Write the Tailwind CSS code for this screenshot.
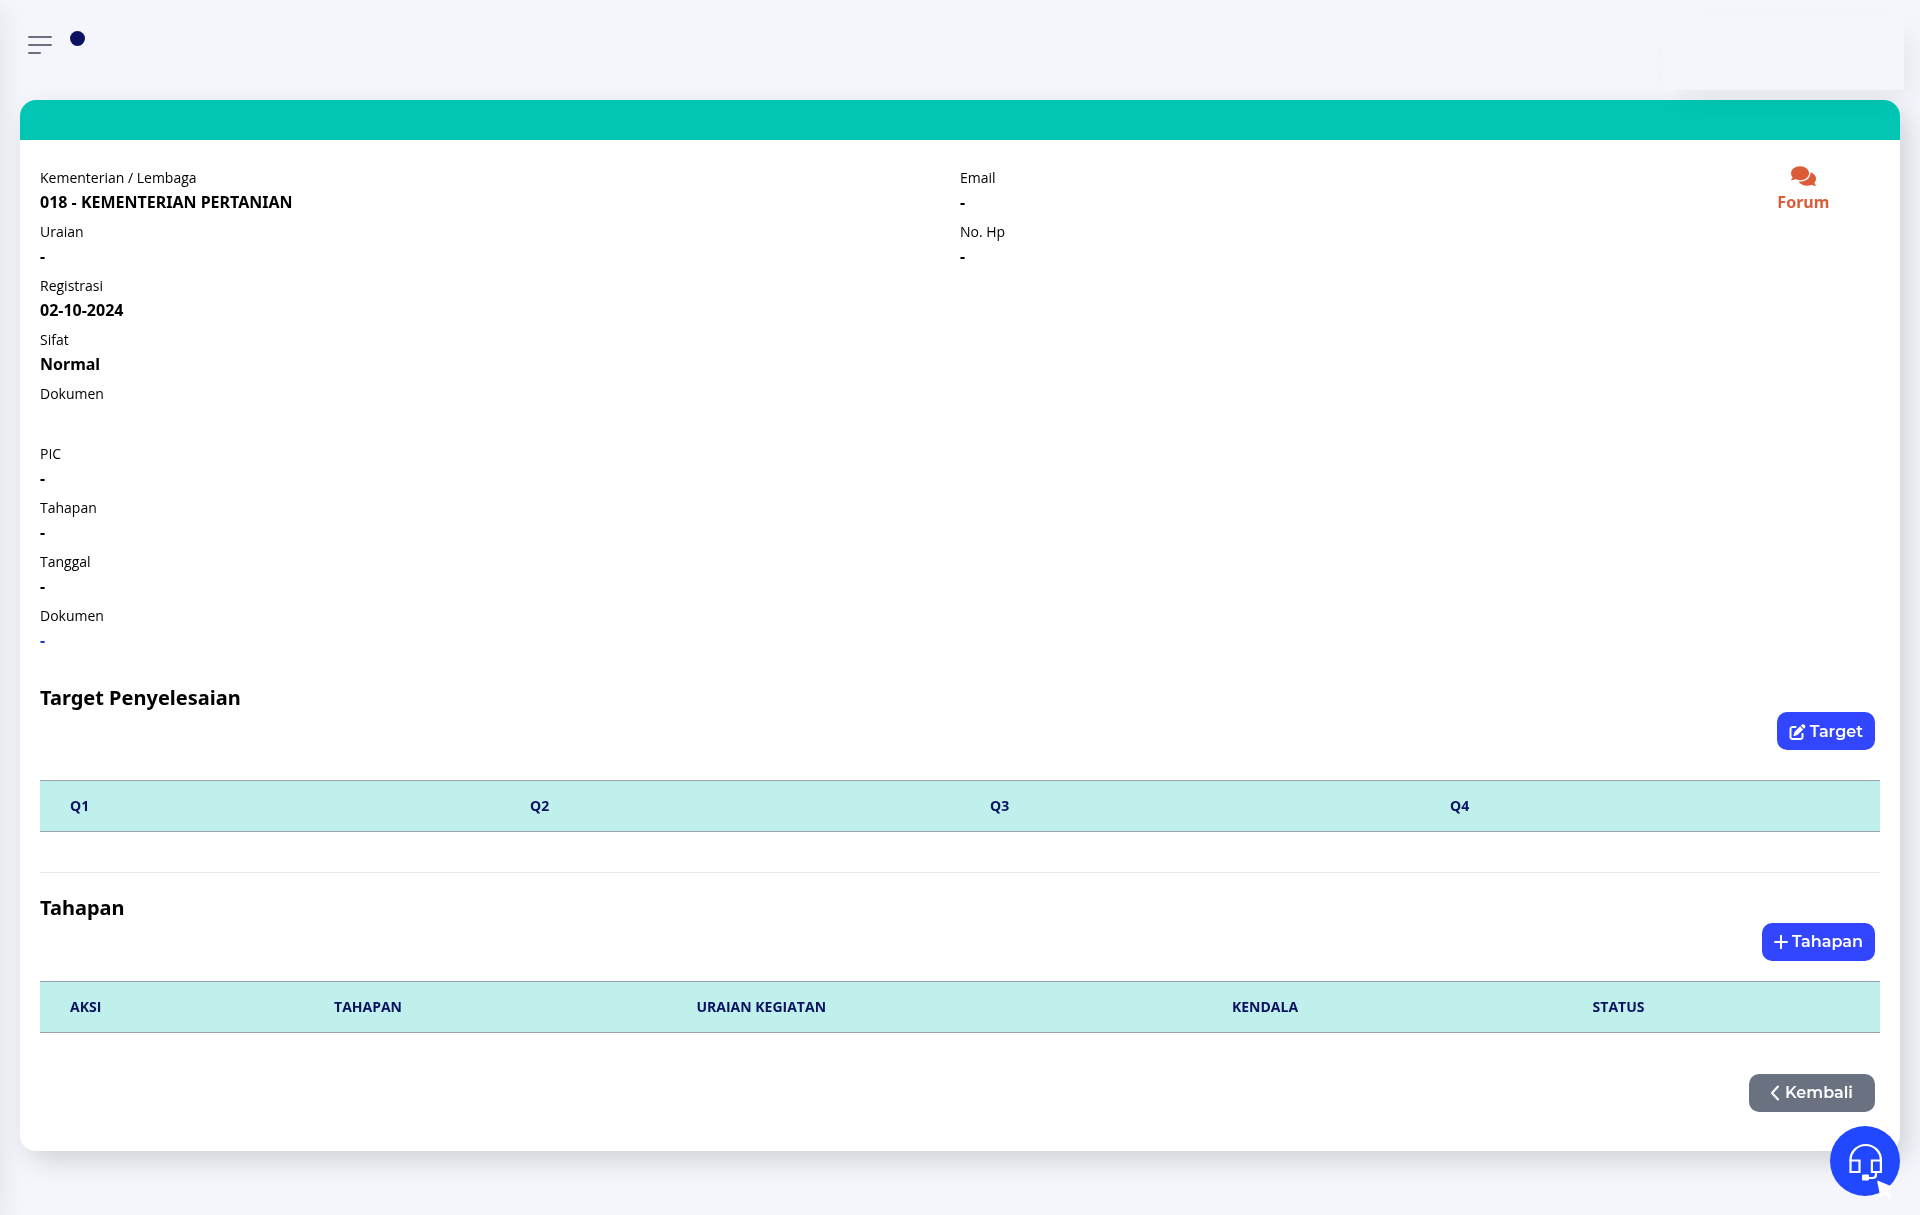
<!DOCTYPE html>
<html lang="id">
<head>
    <meta charset="UTF-8">
    <meta name="viewport" content="width=device-width, initial-scale=1.0">
    <title>Detail Kementerian / Lembaga</title>
    <script src="https://cdn.jsdelivr.net/npm/@tailwindcss/browser@4"></script>
</head>
<body class="min-h-screen overflow-x-hidden bg-[#f4f6fb] font-['Noto_Sans',sans-serif] text-black">
    <!-- Sidebar (tertutup) -->
    <aside class="fixed top-0 bottom-0 -left-20 w-20 shadow-[0_10px_30px_rgba(0,0,0,0.09)]"></aside>

    <header class="relative z-10 flex h-[100px] items-start justify-between pl-7 pr-4">
        <div class="flex gap-[18px]">
            <button type="button" aria-label="Menu" class="mt-9 flex h-[18px] w-6 flex-col justify-between">
                <span class="h-[2px] w-6 rounded bg-gray-500"></span>
                <span class="h-[2px] w-6 rounded bg-gray-500"></span>
                <span class="h-[2px] w-[13px] rounded bg-gray-500"></span>
            </button>
            <span class="mt-[31px] h-[15px] w-[15px] rounded-full bg-[#0d1260]"></span>
        </div>
        <div class="mt-[18px] h-[72px] w-[242px] bg-[#f4f6fb] shadow-[12px_12px_30px_-6px_rgba(0,0,0,0.07)]"></div>
    </header>

    <main class="relative mx-5 mb-16 rounded-2xl bg-white shadow-[8px_10px_28px_-2px_rgba(0,0,0,0.16)]">
        <div class="h-10 rounded-t-2xl bg-[#00c6b3]"></div>
        <div class="px-5 pt-[26px] pb-10">
            <div class="grid grid-cols-12">
                <dl class="col-span-6 flex flex-col gap-[6px]">
                    <div>
                        <dt class="font-['Open_Sans',sans-serif] text-sm/6">Kementerian / Lembaga</dt>
                        <dd class="text-base/6 font-bold">018 - KEMENTERIAN PERTANIAN</dd>
                    </div>
                    <div>
                        <dt class="font-['Open_Sans',sans-serif] text-sm/6">Uraian</dt>
                        <dd class="text-base/6 font-bold">-</dd>
                    </div>
                    <div>
                        <dt class="font-['Open_Sans',sans-serif] text-sm/6">Registrasi</dt>
                        <dd class="text-base/6 font-bold">02-10-2024</dd>
                    </div>
                    <div>
                        <dt class="font-['Open_Sans',sans-serif] text-sm/6">Sifat</dt>
                        <dd class="text-base/6 font-bold">Normal</dd>
                    </div>
                    <div>
                        <dt class="font-['Open_Sans',sans-serif] text-sm/6">Dokumen</dt>
                        <dd class="h-[30px]"></dd>
                    </div>
                    <div>
                        <dt class="font-['Open_Sans',sans-serif] text-sm/6">PIC</dt>
                        <dd class="text-base/6 font-bold">-</dd>
                    </div>
                    <div>
                        <dt class="font-['Open_Sans',sans-serif] text-sm/6">Tahapan</dt>
                        <dd class="text-base/6 font-bold">-</dd>
                    </div>
                    <div>
                        <dt class="font-['Open_Sans',sans-serif] text-sm/6">Tanggal</dt>
                        <dd class="text-base/6 font-bold">-</dd>
                    </div>
                    <div>
                        <dt class="font-['Open_Sans',sans-serif] text-sm/6">Dokumen</dt>
                        <dd class="text-base/6 font-bold"><a href="#" class="text-[#1d43b8]">-</a></dd>
                    </div>
                </dl>
                <dl class="col-span-5 flex flex-col gap-[6px]">
                    <div>
                        <dt class="font-['Open_Sans',sans-serif] text-sm/6">Email</dt>
                        <dd class="text-base/6 font-bold">-</dd>
                    </div>
                    <div>
                        <dt class="font-['Open_Sans',sans-serif] text-sm/6">No. Hp</dt>
                        <dd class="text-base/6 font-bold">-</dd>
                    </div>
                </dl>
                <div class="text-center">
                    <a href="#" class="inline-flex flex-col items-center text-base/6 font-bold text-[#dc5c3a]">
                        <svg class="-mt-[2px] mb-[2px] h-6 w-[25px]" viewBox="0 0 576 512" fill="currentColor"><path d="M416 192c0-88.4-93.1-160-208-160S0 103.6 0 192c0 34.3 14.1 65.9 38 92-13.4 30.2-35.5 54.2-35.8 54.5-2.2 2.3-2.8 5.7-1.5 8.7S4.8 352 8 352c36.6 0 66.9-12.3 88.7-25 32.2 15.7 70.3 25 111.3 25 114.9 0 208-71.6 208-160zm122 220c23.9-26 38-57.7 38-92 0-66.9-53.5-124.2-129.3-148.1.9 6.6 1.3 13.3 1.3 20.1 0 105.9-107.7 192-240 192-10.8 0-21.3-.8-31.7-1.9C207.8 439.6 281.8 480 368 480c41 0 79.1-9.2 111.3-25 21.8 12.7 52.1 25 88.7 25 3.2 0 6.1-1.9 7.3-4.8 1.3-2.9.7-6.3-1.5-8.7-.3-.3-22.4-24.2-35.8-54.5z"/></svg>
                        Forum
                    </a>
                </div>
            </div>

            <h2 class="mt-8 text-xl/7 font-bold">Target Penyelesaian</h2>
            <div class="flex justify-end pr-[5px]">
                <button type="button" class="flex h-[38px] items-center gap-1 rounded-[10px] bg-[#3346ff] px-3 pt-px font-[Montserrat,Inter,sans-serif] text-base font-semibold text-white">
                    <svg class="h-4 w-[17px]" viewBox="0 0 512 512" fill="currentColor"><path d="M471.6 21.7c-21.9-21.9-57.3-21.9-79.2 0L362.3 51.7l97.9 97.9 30.1-30.1c21.9-21.9 21.9-57.3 0-79.2L471.6 21.7zm-299.2 220c-6.1 6.1-10.8 13.6-13.5 21.9l-29.6 88.8c-2.9 8.6-.6 18.1 5.8 24.6s15.9 8.7 24.6 5.8l88.8-29.6c8.2-2.7 15.7-7.4 21.9-13.5L437.7 172.3 339.7 74.3 172.4 241.7zM96 64C43 64 0 107 0 160V416c0 53 43 96 96 96H352c53 0 96-43 96-96V320c0-17.7-14.3-32-32-32s-32 14.3-32 32v96c0 17.7-14.3 32-32 32H96c-17.7 0-32-14.3-32-32V160c0-17.7 14.3-32 32-32h96c17.7 0 32-14.3 32-32s-14.3-32-32-32H96z"/></svg>
                    Target
                </button>
            </div>
            <table class="mt-[30px] w-full table-fixed text-left font-['Open_Sans',sans-serif] text-sm text-[#0d1260]">
                <thead>
                    <tr class="h-[51px] border-y border-gray-400 bg-[#bff0eb]">
                        <th class="px-[30px]">Q1</th>
                        <th class="px-[30px]">Q2</th>
                        <th class="px-[30px]">Q3</th>
                        <th class="px-[30px]">Q4</th>
                    </tr>
                </thead>
            </table>

            <hr class="mt-10 border-gray-200">

            <h2 class="mt-5 text-xl/[30px] font-bold">Tahapan</h2>
            <div class="flex justify-end pr-[5px]">
                <button type="button" class="flex h-[38px] items-center gap-1 rounded-[10px] bg-[#3346ff] px-3 font-[Montserrat,Inter,sans-serif] text-base font-semibold text-white">
                    <svg class="h-[14px] w-[14px]" viewBox="0 0 14 14" fill="none" stroke="currentColor" stroke-width="2" stroke-linecap="round"><path d="M7 0.500v13M1 7h12"/></svg>
                    Tahapan
                </button>
            </div>
            <table class="mt-5 w-full table-fixed text-left font-['Open_Sans',sans-serif] text-sm text-[#0d1260]">
                <thead>
                    <tr class="h-[51px] border-y border-gray-400 bg-[#bff0eb]">
                        <th class="w-[14.35%] px-[30px]">AKSI</th>
                        <th class="w-[19.7%] px-[30px]">TAHAPAN</th>
                        <th class="w-[29.1%] px-[30px]">URAIAN KEGIATAN</th>
                        <th class="w-[19.6%] px-[30px]">KENDALA</th>
                        <th class="px-[30px]">STATUS</th>
                    </tr>
                </thead>
            </table>

            <div class="mt-[41px] -mb-px flex justify-end pr-[5px]">
                <button type="button" class="flex h-[38px] items-center gap-1 rounded-[10px] bg-gray-500 pr-[22px] pl-5 font-[Montserrat,Inter,sans-serif] text-base font-semibold text-white">
                    <svg class="h-4 w-3" viewBox="0 0 12 16" fill="none" stroke="currentColor" stroke-width="2" stroke-linecap="round" stroke-linejoin="round"><path d="M9 1.500L3 8l6 6.500"/></svg>
                    Kembali
                </button>
            </div>
        </div>
    </main>

    <button type="button" aria-label="Bantuan" class="fixed right-5 bottom-[19px] z-20 h-[70px] w-[70px] rounded-full bg-[#2148ff] text-white">
        <svg class="h-[70px] w-[70px] overflow-visible" viewBox="0 0 70 70" fill="none" stroke="currentColor" stroke-width="2.2">
            <path d="M20.500 35v-1a15.200 15 0 0 1 30.400 0v1"/>
            <path d="M20.500 34.500h9v11.500h-9zM41.900 34.500h9v11.500h-9z"/>
            <path d="M46 47v1.500q0 3.500-3.500 3.500H39"/>
            <rect x="32" y="48.500" width="7" height="6" rx="1" fill="currentColor" stroke="none"/>
            <path d="M48 55.500l13 5.500-5 3 5 7-1.500 1-5.500-6-3 4z" fill="currentColor" stroke-width="1.500" stroke-linejoin="round"/>
        </svg>
    </button>
</body>
</html>
